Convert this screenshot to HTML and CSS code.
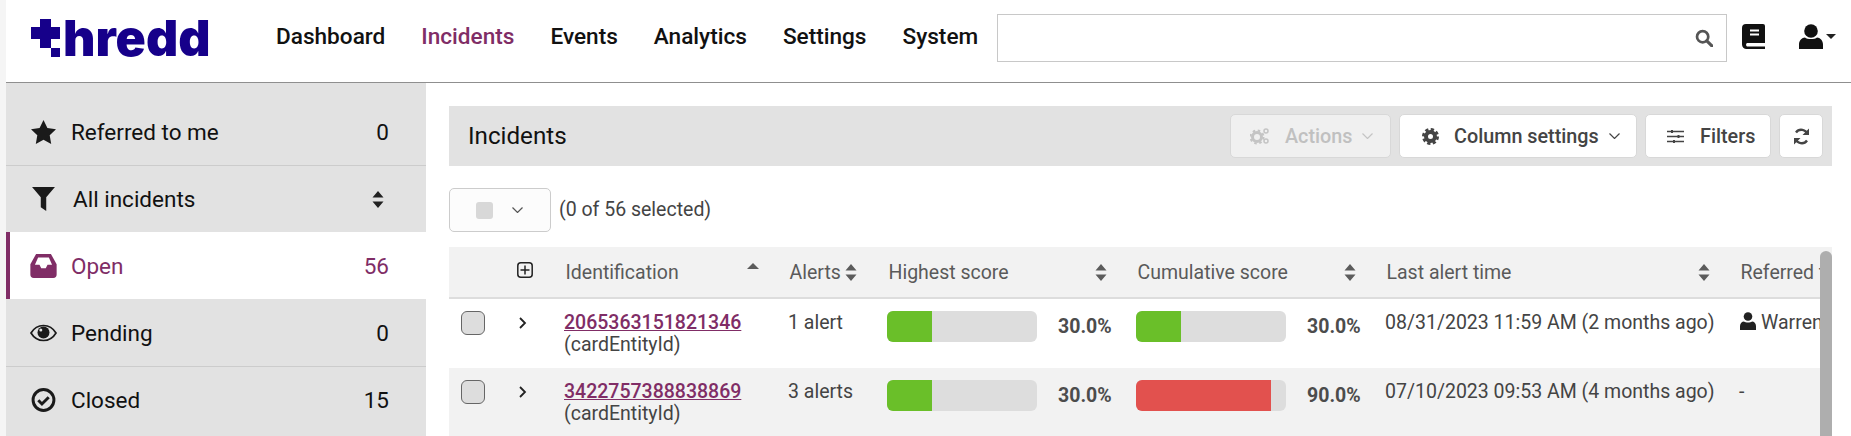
FILE: index.html
```html
<!DOCTYPE html>
<html lang="en">
<head>
<meta charset="utf-8">
<title>Thredd - Incidents</title>
<link rel="stylesheet" href="styles.css">
</head>
<body>
<div class="app">
  <header class="topbar">
    <a class="logo" aria-label="thredd">
      <span class="logo-mark"><i class="logo-v"></i><i class="logo-h"></i><i class="logo-dot"></i></span>
      <span class="logo-text">hredd</span>
    </a>
    <nav class="nav">
      <a class="nav-item">Dashboard</a>
      <a class="nav-item is-active">Incidents</a>
      <a class="nav-item">Events</a>
      <a class="nav-item">Analytics</a>
      <a class="nav-item">Settings</a>
      <a class="nav-item">System</a>
    </nav>
    <div class="search">
      <svg class="search-icon" viewBox="0 0 16 16"><circle cx="6.800" cy="6.800" r="5" fill="none" stroke="#555" stroke-width="2.400"/><path d="M10.500 10.500L15 15" stroke="#555" stroke-width="2.800" stroke-linecap="round"/></svg>
    </div>
    <svg class="book-icon" viewBox="0 0 23 25"><path fill="#111" d="M4 0H21a2 2 0 0 1 2 2V19H5a2 2 0 0 0 0 3.400H23V25H4.500A4.500 4.500 0 0 1 0 20.500V4A4 4 0 0 1 4 0z"/><path d="M8 6.500H17M8 10.500H17" stroke="#fff" stroke-width="2.200"/></svg>
    <div class="user-menu">
      <svg class="user-icon" viewBox="0 0 24 25"><circle cx="12" cy="7" r="6.800" fill="#111"/><path fill="#111" d="M0 25V20.500C0 16.500 3 13.500 6 13.500C8 15.500 16 15.500 18 13.500C21 13.500 24 16.500 24 20.500V25z"/></svg>
      <svg class="user-caret" viewBox="0 0 10 5"><path d="M0 0H10L5 5z" fill="#222"/></svg>
    </div>
  </header>

  <div class="main">
    <aside class="sidebar">
      <div class="side-item side-first">
        <svg class="side-icon" viewBox="0 0 25 24"><path fill="#1a1a1a" d="M12.500 0l3.900 8 8.600 1.200-6.300 6 1.500 8.800-7.700-4.200L4.800 24l1.500-8.800-6.300-6L8.600 8z"/></svg>
        <span class="side-label">Referred to me</span><span class="side-count">0</span>
      </div>
      <div class="side-item side-filter">
        <svg class="side-icon" viewBox="0 0 21 22"><path fill="#1a1a1a" d="M0 0H21L13 9.500V22L8 18.500V9.500z"/></svg>
        <span class="side-label side-label-wide">All incidents</span>
        <svg class="side-sort" viewBox="0 0 12 17"><path fill="#222" d="M6 0l5.500 6.500H.5zM6 17L.5 10.500h11z"/></svg>
      </div>
      <div class="side-item is-open">
        <svg class="side-icon" viewBox="0 0 23 21"><path fill="#802d66" fill-rule="evenodd" d="M5 0H18L23 9V18a3 3 0 0 1-3 3H3a3 3 0 0 1-3-3V9zM6.800 3L4 9.500H8L9.500 12.500H13.500L15 9.500H19L16.200 3z"/></svg>
        <span class="side-label">Open</span><span class="side-count">56</span>
      </div>
      <div class="side-item side-pending">
        <svg class="side-icon" viewBox="0 0 27 17"><path fill="none" stroke="#1a1a1a" stroke-width="1.700" d="M1 8.500C4 3.500 8.500 1 13.500 1S23 3.500 26 8.500C23 13.500 18.500 16 13.500 16S4 13.500 1 8.500z"/><circle cx="13.500" cy="8" r="6" fill="#1a1a1a"/><circle cx="10.800" cy="5.500" r="1.500" fill="#e2e2e2"/></svg>
        <span class="side-label">Pending</span><span class="side-count">0</span>
      </div>
      <div class="side-item side-closed">
        <svg class="side-icon" viewBox="0 0 23 23"><circle cx="11.500" cy="11.500" r="10" fill="none" stroke="#1a1a1a" stroke-width="2.800"/><path d="M6.500 11.800l3.500 3.500 6.500-6.500" fill="none" stroke="#1a1a1a" stroke-width="2.800"/></svg>
        <span class="side-label">Closed</span><span class="side-count">15</span>
      </div>
    </aside>

    <section class="content">
      <div class="panel-bar">
        <h1 class="panel-title">Incidents</h1>
        <div class="panel-actions">
          <button class="btn btn-disabled btn-actions">
            <svg class="btn-icon-cogs" viewBox="0 0 20 18"><circle cx="7" cy="10" r="4.500" fill="none" stroke="#c4c4c4" stroke-width="3"/><circle cx="7" cy="10" r="6.500" fill="none" stroke="#c4c4c4" stroke-width="2" stroke-dasharray="2.500 2.600"/><circle cx="16" cy="4" r="2" fill="none" stroke="#c4c4c4" stroke-width="1.500"/><circle cx="16" cy="14" r="2" fill="none" stroke="#c4c4c4" stroke-width="1.500"/></svg>
            <span>Actions</span>
            <svg class="chev" viewBox="0 0 11 6"><path d="M.5.500l5 5 5-5" fill="none" stroke="#c4c4c4" stroke-width="1.200"/></svg>
          </button>
          <button class="btn btn-columns">
            <svg class="btn-icon" viewBox="0 0 17 17"><circle cx="8.500" cy="8.500" r="4.500" fill="none" stroke="#444" stroke-width="4"/><circle cx="8.500" cy="8.500" r="7" fill="none" stroke="#444" stroke-width="3" stroke-dasharray="3.200 2.300"/></svg>
            <span>Column settings</span>
            <svg class="chev" viewBox="0 0 11 6"><path d="M.5.500l5 5 5-5" fill="none" stroke="#444" stroke-width="1.200"/></svg>
          </button>
          <button class="btn btn-filters">
            <svg class="btn-icon" viewBox="0 0 17 15"><path d="M0 2.500H17M0 7.500H17M0 12.500H17" stroke="#444" stroke-width="1.300"/><path d="M4 1h2v3H4zM10.500 6h2v3h-2zM6 11h2v3H6z" fill="#444"/></svg>
            <span>Filters</span>
          </button>
          <button class="btn btn-refresh" aria-label="Refresh">
            <svg class="btn-icon" viewBox="0 0 17 17"><path d="M14.500 6.500A6.500 6.500 0 0 0 3 4.500M2.500 10.500A6.500 6.500 0 0 0 14 12.500" fill="none" stroke="#444" stroke-width="2.400"/><path d="M16 .5V7H9.500zM1 16.500V10H7.500z" fill="#444"/></svg>
          </button>
        </div>
      </div>

      <div class="select-row">
        <div class="select-drop">
          <span class="select-box"></span>
          <svg class="chev" viewBox="0 0 11 6"><path d="M.5.500l5 5 5-5" fill="none" stroke="#555" stroke-width="1.200"/></svg>
        </div>
        <span class="select-count">(0 of 56 selected)</span>
      </div>

      <div class="table-wrap">
        <div class="table-clip">
          <div class="row row-head">
            <div class="cell"></div>
            <div class="cell cell-expand"><svg class="plus-icon" viewBox="0 0 16 16"><rect x=".8" y=".8" width="14.400" height="14.400" rx="3" fill="none" stroke="#222" stroke-width="1.500"/><path d="M8 3.500V12.500M3.500 8H12.500" stroke="#222" stroke-width="1.500"/></svg></div>
            <div class="cell head-cell head-wide">Identification<svg class="sort sort-up" viewBox="0 0 12 6"><path d="M6 0l6 6H0z" fill="#5c5c5c"/></svg></div>
            <div class="cell head-cell head-tight">Alerts<svg class="sort" viewBox="0 0 12 17"><path fill="#5c5c5c" d="M6 0l5.500 6.500H.5zM6 17L.5 10.500h11z"/></svg></div>
            <div class="cell head-cell head-wide">Highest score<svg class="sort" viewBox="0 0 12 17"><path fill="#5c5c5c" d="M6 0l5.500 6.500H.5zM6 17L.5 10.500h11z"/></svg></div>
            <div class="cell head-cell head-wide">Cumulative score<svg class="sort" viewBox="0 0 12 17"><path fill="#5c5c5c" d="M6 0l5.500 6.500H.5zM6 17L.5 10.500h11z"/></svg></div>
            <div class="cell head-cell head-wide">Last alert time<svg class="sort" viewBox="0 0 12 17"><path fill="#5c5c5c" d="M6 0l5.500 6.500H.5zM6 17L.5 10.500h11z"/></svg></div>
            <div class="cell head-cell">Referred to</div>
          </div>

          <div class="row row-body">
            <div class="cell cell-check"><span class="checkbox"></span></div>
            <div class="cell cell-expand"><svg class="row-chev" viewBox="0 0 8 12"><path d="M1 1l5 5-5 5" fill="none" stroke="#222" stroke-width="1.800"/></svg></div>
            <div class="cell cell-text"><a class="ident">2065363151821346</a><br>(cardEntityId)</div>
            <div class="cell cell-text">1 alert</div>
            <div class="cell score"><div class="bar"><div class="bar-fill fill-green" style="width:30%"></div></div><span class="pct">30.0%</span></div>
            <div class="cell score"><div class="bar"><div class="bar-fill fill-green" style="width:30%"></div></div><span class="pct">30.0%</span></div>
            <div class="cell cell-text">08/31/2023 11:59 AM (2 months ago)</div>
            <div class="cell cell-text"><svg class="ref-icon" viewBox="0 0 16 18"><circle cx="8" cy="4.500" r="4.300" fill="#222"/><path d="M0 18V14C0 11.500 2 9.500 4 9.500C5.500 10.800 10.500 10.800 12 9.500C14 9.500 16 11.500 16 14V18z" fill="#222"/></svg>Warren Smith</div>
          </div>

          <div class="row row-body row-alt">
            <div class="cell cell-check"><span class="checkbox"></span></div>
            <div class="cell cell-expand"><svg class="row-chev" viewBox="0 0 8 12"><path d="M1 1l5 5-5 5" fill="none" stroke="#222" stroke-width="1.800"/></svg></div>
            <div class="cell cell-text"><a class="ident">3422757388838869</a><br>(cardEntityId)</div>
            <div class="cell cell-text">3 alerts</div>
            <div class="cell score"><div class="bar"><div class="bar-fill fill-green" style="width:30%"></div></div><span class="pct">30.0%</span></div>
            <div class="cell score"><div class="bar"><div class="bar-fill fill-red" style="width:90%"></div></div><span class="pct">90.0%</span></div>
            <div class="cell cell-text">07/10/2023 09:53 AM (4 months ago)</div>
            <div class="cell cell-text">-</div>
          </div>
        </div>
        <div class="scrollbar"><div class="scroll-thumb"></div></div>
      </div>
    </section>
  </div>
</div>
</body>
</html>
```

FILE: styles.css
```css
* { box-sizing: border-box; }

html, body {
  margin: 0;
  height: 100%;
  overflow: hidden;
  background: #fff;
}

body {
  font-family: Roboto, "Liberation Sans", sans-serif;
  color: #111;
}

.app {
  margin-left: 6px;
  height: 436px;
  overflow: hidden;
  box-shadow: -6px 0 0 #f5f5f5;
}

/* Top bar */
.topbar {
  height: 83px;
  border-bottom: 1px solid #8f8f8f;
  display: flex;
  align-items: flex-start;
  background: #fff;
}

.logo {
  width: 252px;
  padding: 19px 0 0 25px;
  display: flex;
  color: #16008a;
}

.logo-mark {
  display: grid;
  grid-template-columns: 9px 11px 9px;
  grid-template-rows: 8px 12px 9px 9px;
  width: 29px;
  height: 38px;
}

.logo-v {
  grid-column: 2;
  grid-row: 1 / 4;
  background: #16008a;
}

.logo-h {
  grid-column: 1 / 4;
  grid-row: 2;
  background: #16008a;
}

.logo-dot {
  grid-column: 3;
  grid-row: 4;
  background: #16008a;
}

.logo-text {
  margin-left: 3px;
  font-family: Inter, Roboto, sans-serif;
  font-size: 50px;
  font-weight: 900;
  line-height: 38px;
  letter-spacing: 0;
}

.nav {
  display: flex;
  height: 72px;
  align-items: center;
}

.nav-item {
  font-size: 22.600px;
  font-weight: 500;
  padding: 0 18px;
  color: #111;
}

.nav-item.is-active { color: #802d66; }

.search {
  margin: 14px 0 0 1px;
  width: 730px;
  height: 48px;
  border: 1px solid #c8c8c8;
  display: flex;
  align-items: center;
  justify-content: flex-end;
  padding-right: 13px;
}

.search-icon { width: 18px; height: 18px; }

.book-icon {
  width: 23px;
  height: 25px;
  margin: 24px 0 0 15px;
}

.user-menu {
  display: flex;
  align-items: center;
  margin: 24px 0 0 34px;
}

.user-icon { width: 24px; height: 25px; }

.user-caret { width: 10px; height: 5px; margin-left: 3px; }

/* Layout */
.main {
  display: flex;
  height: 353px;
}

.sidebar {
  width: 420px;
  flex: none;
  background: #e2e2e2;
  font-size: 22.500px;
}

.side-item {
  height: 67px;
  display: flex;
  align-items: center;
  padding: 0 37px 0 24px;
  color: #111;
}

.side-first {
  height: 83px;
  padding-top: 16px;
  border-bottom: 1px solid #ccc;
}

.side-filter { height: 66px; }

.side-pending {
  height: 68px;
  border-bottom: 1px solid #ccc;
}

.side-closed { padding-bottom: 2px; }

.side-icon {
  width: 27px;
  height: 24px;
  flex: none;
}

.side-label {
  margin-left: 14px;
  flex: 1;
}

.side-label-wide { margin-left: 16px; }

.side-count { text-align: right; }

.side-sort { width: 12px; height: 17px; margin-right: 5px; }

.is-open {
  background: #fff;
  color: #802d66;
  border-left: 4px solid #802d66;
  padding-left: 20px;
}

/* Content */
.content {
  flex: 1;
  min-width: 0;
  padding: 23px 19px 0 23px;
}

.panel-bar {
  height: 60px;
  background: #e2e2e2;
  display: flex;
  align-items: center;
  padding: 0 9px 0 19px;
}

.panel-title {
  margin: 0;
  font-size: 24.200px;
  font-weight: 400;
  color: #111;
  flex: 1;
}

.panel-actions {
  display: flex;
  gap: 8px;
}

.btn {
  height: 44px;
  border: 1px solid #d8d8d8;
  border-radius: 5px;
  background: #fff;
  font: 500 19.800px Roboto, "Liberation Sans", sans-serif;
  color: #444;
  display: flex;
  align-items: center;
  padding: 0;
}

.btn-disabled {
  background: #f0f0f0;
  color: #c0c0c0;
}

.btn-actions { width: 161px; padding-left: 19px; }
.btn-actions span { margin: 0 9px 0 15px; }
.btn-columns { width: 238px; padding-left: 22px; }
.btn-columns span { margin: 0 10px 0 15px; }
.btn-filters { width: 126px; padding-left: 21px; }
.btn-filters span { margin-left: 16px; }
.btn-refresh { width: 44px; padding-left: 13px; }

.btn-icon { width: 17px; height: 17px; flex: none; }
.btn-icon-cogs { width: 20px; height: 18px; flex: none; }

.chev { width: 11px; height: 6px; flex: none; }

.select-row {
  display: flex;
  align-items: center;
  margin-top: 22px;
  height: 44px;
  gap: 8px;
}

.select-drop {
  width: 102px;
  height: 44px;
  border: 1px solid #ccc;
  border-radius: 5px;
  background: #fcfcfc;
  display: flex;
  align-items: center;
  padding-left: 26px;
  gap: 19px;
}

.select-box {
  width: 17px;
  height: 17px;
  background: #d8d8d8;
  border-radius: 3px;
}

.select-count {
  font-size: 19.500px;
  color: #444;
  margin-top: -2px;
}

/* Table */
.table-wrap {
  margin-top: 15px;
  display: flex;
}

.table-clip {
  width: 1371px;
  overflow: hidden;
}

.row {
  display: grid;
  grid-template-columns: 56px 59px 224px 99px 249px 249px 354px 200px;
  width: 1490px;
  font-size: 19.500px;
  line-height: 22px;
  color: #444;
}

.row-head {
  height: 52px;
  background: #f2f2f2;
  border-bottom: 2px solid #ddd;
  color: #5a5a5a;
  line-height: 23px;
}

.row-body {
  height: 69px;
  background: #fff;
}

.row-alt { background: #f2f2f2; }

.row-body .cell { padding-top: 12px; }

.row-body .cell-text { padding-top: 13px; }

.cell { white-space: nowrap; min-width: 0; }

.row-head .cell { height: 50px; align-items: center; }

.head-cell {
  display: flex;
  padding-left: 1.500px;
}

.head-wide {
  justify-content: space-between;
  padding-right: 29px;
}

.head-tight { gap: 4px; }

.sort { width: 12px; height: 17px; flex: none; }
.sort-up { height: 6px; margin-bottom: 12px; }

.row-head .cell-expand { display: flex; padding-left: 12px; margin-top: -2px; }

.plus-icon { width: 16px; height: 16px; }

.cell-check { padding-left: 12px; }

.row-body .cell-expand { padding-left: 14px; padding-top: 18px; }

.row-chev { width: 8px; height: 12px; display: block; }

.checkbox {
  display: block;
  width: 24px;
  height: 24px;
  border: 1px solid #666;
  border-radius: 6px;
  background: #ddd;
}

.ident {
  color: #802d66;
  text-decoration: underline;
  font-weight: 500;
}

.score {
  display: flex;
  align-items: flex-start;
}

.bar {
  width: 150px;
  height: 31px;
  background: #ddd;
  border-radius: 6px;
  overflow: hidden;
  flex: none;
}

.bar-fill { height: 100%; }
.fill-green { background: #6abf29; }
.fill-red { background: #e2514e; }

.pct {
  margin-left: 21px;
  font-weight: 700;
  color: #4c4c4c;
  line-height: 31px;
}

.ref-icon { width: 16px; height: 18px; margin: 0 5px 0 1px; vertical-align: -1px; }

.scrollbar {
  width: 12px;
  background: #f2f2f2;
  padding-top: 4px;
  height: 189px;
}

.scroll-thumb {
  background: #aeaeae;
  height: 100%;
  border-radius: 6px 6px 0 0;
}
```
